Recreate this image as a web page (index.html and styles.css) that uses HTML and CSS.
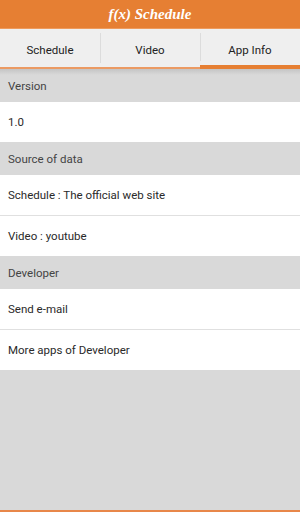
FILE: index.html
```html
<!DOCTYPE html>
<html lang="en">
<head>
  <meta charset="UTF-8">
  <title>f(x) Schedule</title>
  <link rel="stylesheet" href="styles.css">
</head>
<body>
  <div class="app">
    <header class="title-bar">
      <h1>f(x) Schedule</h1>
    </header>

    <nav class="tabs">
      <div class="tab">Schedule</div>
      <div class="tab">Video</div>
      <div class="tab active">App Info</div>
    </nav>

    <div class="info">
      <div class="section">Version</div>
      <div class="item">1.0</div>

      <div class="section">Source of data</div>
      <div class="item">Schedule : The official web site</div>
      <div class="item">Video : youtube</div>

      <div class="section">Developer</div>
      <div class="item">Send e-mail</div>
      <div class="item">More apps of Developer</div>
    </div>

    <div class="bottom-line"></div>
  </div>
</body>
</html>
```

FILE: styles.css
```css
body {
  margin: 0;
  background: #d9d9d9;
  font-family: Roboto, 'Noto Sans', sans-serif;
}

.app {
  display: flex;
  flex-direction: column;
  height: 100vh;
}

.title-bar {
  height: 28px;
  background: #e67f33;
  border-bottom: 1px solid #ee9a5c;
  display: flex;
  align-items: center;
  justify-content: center;
}

.title-bar h1 {
  margin: 0;
  color: white;
  font-family: 'Liberation Serif', serif;
  font-style: italic;
  font-weight: bold;
  font-size: 15px;
}

.tabs {
  display: grid;
  grid-template-columns: 100px 100px 100px;
  height: 40px;
  background: #efefef;
}

.tab {
  display: flex;
  align-items: center;
  justify-content: center;
  padding-top: 3px;
  font-size: 11.5px;
  color: #222;
  border-bottom: 2px solid #eb9a63;
  position: relative;
}

.tab + .tab::before {
  content: "";
  position: absolute;
  left: 0;
  top: 4px;
  bottom: 4px;
  width: 1px;
  background: #dcdcdc;
}

.tab.active {
  border-bottom: 4px solid #e67f33;
  padding-top: 5px;
}

.info {
  flex: 1;
  background: #d9d9d9;
}

.section {
  height: 33px;
  padding-left: 8px;
  display: flex;
  align-items: center;
  font-size: 11.5px;
  color: #444;
  background: #d9d9d9;
}

.info .section:first-child {
  background: linear-gradient(#c4c4c4, #d9d9d9 6px);
}

.item {
  height: 40px;
  padding-left: 8px;
  display: flex;
  align-items: center;
  font-size: 11.5px;
  color: #2a2a2a;
  background: white;
}

.item + .item {
  border-top: 1px solid #e0e0e0;
}

.bottom-line {
  height: 2px;
  background: #e8874a;
}
```
